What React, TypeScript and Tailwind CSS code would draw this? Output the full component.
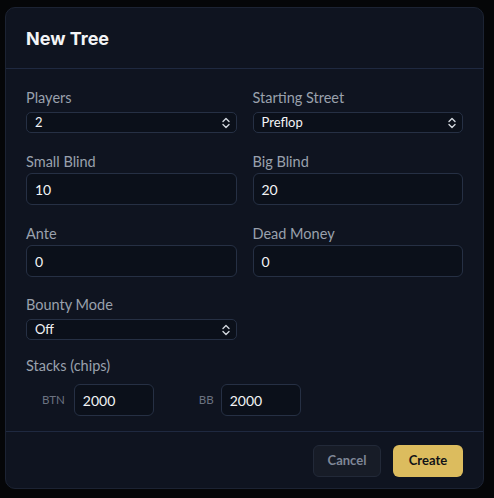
import { ReactNode } from 'react'

const font = { fontFamily: 'Lato, "Noto Sans", sans-serif' }

function Chevrons() {
  return (
    <svg width="8" height="12" viewBox="0 0 8 12" fill="none" className="text-gray-300">
      <path d="M1 4.5 L4 1.5 L7 4.5" stroke="currentColor" strokeWidth="1.4" strokeLinecap="round" strokeLinejoin="round" />
      <path d="M1 7.5 L4 10.5 L7 7.5" stroke="currentColor" strokeWidth="1.4" strokeLinecap="round" strokeLinejoin="round" />
    </svg>
  )
}

function Field({ label, children, tight }: { label: string; children: ReactNode; tight?: boolean }) {
  return (
    <div className="flex flex-col">
      <span className={`text-[14.5px] leading-5 text-[#9aa1ad] ${tight ? 'mb-[1px]' : 'mb-1'}`}>{label}</span>
      {children}
    </div>
  )
}

function SelectBox({ value }: { value: string }) {
  return (
    <div className="h-[21px] flex items-center justify-between rounded-[5px] border border-[#263044] bg-[#0b101a] pl-2 pr-[6px] text-[13px] text-gray-100">
      <span>{value}</span>
      <Chevrons />
    </div>
  )
}

function InputBox({ value, className = '' }: { value: string; className?: string }) {
  return (
    <div
      className={`h-[32px] flex items-center rounded-[6px] border border-[#263044] bg-[#0b101a] px-2 text-[14px] text-gray-100 ${className}`}
    >
      {value}
    </div>
  )
}

export default function App() {
  return (
    <div className="w-[494px] h-[498px] bg-[#050608] pt-[7px] pl-[5px]" style={font}>
      <div className="w-[479px] h-[482px] rounded-[10px] border border-[#1c2333] bg-[#0f1420] flex flex-col">
        <div className="h-[61px] flex items-center px-5 border-b border-[#1f2940]">
          <h1 className="text-[18px] font-bold text-gray-100 mt-[1px]" style={{ fontFamily: 'Inter, sans-serif' }}>
            New Tree
          </h1>
        </div>
        <div className="flex-1 px-5 pt-[19px] flex flex-col">
          <div className="grid grid-cols-2 gap-4">
            <Field label="Players">
              <SelectBox value="2" />
            </Field>
            <Field label="Starting Street">
              <SelectBox value="Preflop" />
            </Field>
          </div>
          <div className="grid grid-cols-2 gap-4 mt-[19px]">
            <Field label="Small Blind" tight>
              <InputBox value="10" />
            </Field>
            <Field label="Big Blind" tight>
              <InputBox value="20" />
            </Field>
          </div>
          <div className="grid grid-cols-2 gap-4 mt-[19px]">
            <Field label="Ante" tight>
              <InputBox value="0" />
            </Field>
            <Field label="Dead Money" tight>
              <InputBox value="0" />
            </Field>
          </div>
          <div className="grid grid-cols-2 gap-4 mt-[18px]">
            <Field label="Bounty Mode">
              <SelectBox value="Off" />
            </Field>
          </div>
          <div className="flex flex-col mt-4">
            <span className="text-[14.5px] leading-5 text-[#9aa1ad] mb-2">Stacks (chips)</span>
            <div className="flex items-center pl-4 gap-[45px]">
              <div className="flex items-center gap-[9px]">
                <span className="text-[11.5px] text-[#6b7280]">BTN</span>
                <InputBox value="2000" className="w-[80px]" />
              </div>
              <div className="flex items-center gap-[7px]">
                <span className="text-[11.5px] text-[#6b7280]">BB</span>
                <InputBox value="2000" className="w-[80px]" />
              </div>
            </div>
          </div>
        </div>
        <div className="h-[57px] border-t border-[#1f2940] flex items-center justify-end gap-3 px-5 pt-[1px]">
          <button className="h-[32px] w-[68px] rounded-[6px] border border-[#222938] bg-[#171c27] text-[13px] font-bold text-[#7f8797]">
            Cancel
          </button>
          <button className="h-[32px] w-[70px] rounded-[6px] bg-[#dcbc5e] text-[13px] font-bold text-[#111317]">
            Create
          </button>
        </div>
      </div>
    </div>
  )
}
